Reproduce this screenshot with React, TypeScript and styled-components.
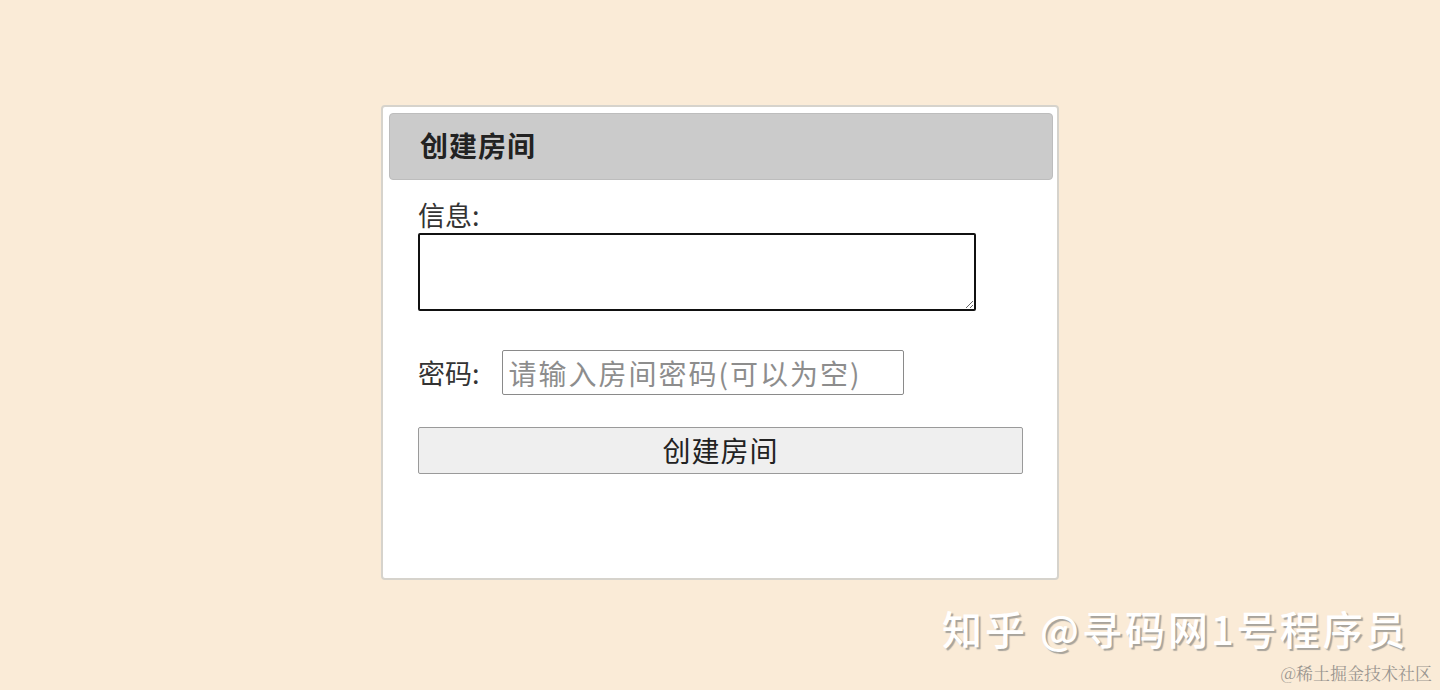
import React from "react";
import styled, { createGlobalStyle } from "styled-components";

const Global = createGlobalStyle`
  html, body { margin: 0; padding: 0; }
  body {
    background: #faebd7;
    font-family: "Noto Sans CJK SC", "Noto Sans", sans-serif;
    width: 1440px;
    height: 690px;
    overflow: hidden;
  }
`;

const Page = styled.div`
  position: relative;
  width: 1440px;
  height: 690px;
  display: flex;
  justify-content: center;
  align-items: flex-start;
  padding-top: 105px;
  box-sizing: border-box;
`;

const Card = styled.div`
  width: 678px;
  height: 475px;
  box-sizing: border-box;
  background: #fff;
  border: 2px solid #d6d3cc;
  border-radius: 4px;
  padding: 6px 4px 0 6px;
  display: flex;
  flex-direction: column;
`;

const Header = styled.div`
  height: 67px;
  background: #cbcbcb;
  border: 1px solid #bdbdbd;
  border-radius: 4px;
  box-sizing: border-box;
  display: flex;
  align-items: center;
  padding: 0 0 4px 30px;
  font-size: 28px;
  font-weight: 700;
  letter-spacing: 1px;
  color: #222;
`;

const Body = styled.div`
  padding: 19px 0 0 29px;
  display: flex;
  flex-direction: column;
`;

const Label = styled.label`
  font-size: 27px;
  color: #333;
  line-height: 32px;
  white-space: nowrap;
`;

const TextArea = styled.textarea`
  width: 558px;
  height: 78px;
  box-sizing: border-box;
  border: 2px solid #111;
  border-radius: 2px;
  resize: both;
  margin-top: 2px;
  font-family: inherit;
`;

const Row = styled.div`
  display: flex;
  align-items: center;
  gap: 22px;
  margin-top: 39px;
`;

const Input = styled.input`
  width: 402px;
  height: 45px;
  box-sizing: border-box;
  border: 1px solid #8a8a8a;
  border-radius: 2px;
  padding: 0 6px;
  font-family: inherit;
  font-size: 28px;
  letter-spacing: 2px;
  color: #333;
  &::placeholder { color: #8d8d8d; }
`;

const Button = styled.button`
  width: 605px;
  height: 47px;
  margin-top: 32px;
  background: #efefef;
  border: 1px solid #9a9a9a;
  border-radius: 2px;
  font-family: inherit;
  font-size: 28px;
  letter-spacing: 1px;
  color: #222;
  padding: 0 0 2px;
`;

const Watermark = styled.div`
  position: absolute;
  left: 942px;
  top: 599px;
  font-size: 40px;
  font-weight: 500;
  color: #fff;
  text-shadow: 2px 2px 1px #a8a49c;
  white-space: nowrap;
  letter-spacing: 3px;
`;

const SubMark = styled.div`
  position: absolute;
  right: 8px;
  top: 660px;
  font-size: 17px;
  color: #9a9690;
  font-family: "Noto Serif CJK SC", "Noto Sans CJK SC", serif;
  white-space: nowrap;
`;

export default function App() {
  return (
    <>
      <Global />
      <Page>
        <Card>
          <Header>创建房间</Header>
          <Body>
            <Label>信息:</Label>
            <TextArea />
            <Row>
              <Label>密码:</Label>
              <Input placeholder="请输入房间密码(可以为空)" />
            </Row>
            <Button>创建房间</Button>
          </Body>
        </Card>
        <Watermark>知乎 @寻码网1号程序员</Watermark>
        <SubMark>@稀土掘金技术社区</SubMark>
      </Page>
    </>
  );
}
